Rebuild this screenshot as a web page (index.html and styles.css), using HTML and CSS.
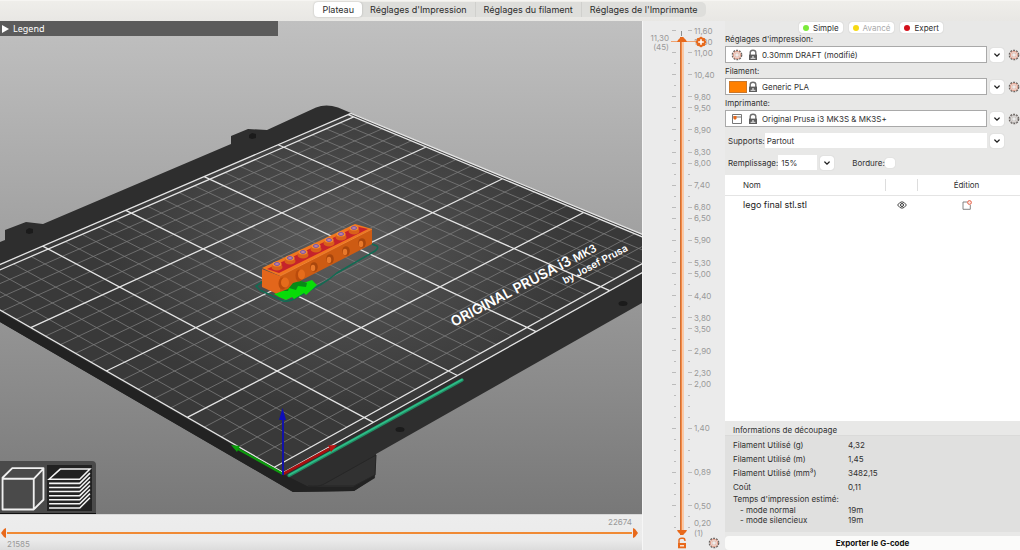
FILE: index.html
```html
<!DOCTYPE html>
<html lang="fr">
<head>
  <meta charset="UTF-8">
  <title>Plateau</title>
  <link rel="stylesheet" href="styles.css">
</head>
<body>
  <svg class="symbols" width="0" height="0" aria-hidden="true">
    <symbol id="gear" viewBox="0 0 12 12">
      <circle cx="6" cy="6" r="4.6" fill="none" stroke="#6b6461" stroke-width="1.5" stroke-dasharray="1.9 .99"/>
      <circle cx="6" cy="6" r="3.7" fill="#f3e9e5" stroke="currentColor" stroke-width=".8"/>
      <circle cx="6" cy="6" r="2.2" fill="#ededec" stroke="currentColor" stroke-width=".5"/>
    </symbol>
    <symbol id="lock" viewBox="0 0 10 12">
      <path d="M2.2 6V3.4Q2.2 1.2 5 1.2Q7.8 1.2 7.8 3.4V6" fill="none" stroke="#6e6e6e" stroke-width="1.4"/>
      <rect x="1" y="5.6" width="8" height="5.4" fill="#5c5c5c"/>
      <path d="M2.6 8.8h4.8v1H2.6z" fill="#e8e8e8"/>
      <path d="M4.4 7h1.2v2H4.4z" fill="#e8e8e8"/>
    </symbol>
    <symbol id="chevron" viewBox="0 0 8 8">
      <path d="M1.8 3L4 5.1L6.2 3" fill="none" stroke="#222" stroke-width="1.3" stroke-linecap="round"/>
    </symbol>
  </svg>

  <header>
    <nav class="tabs">
      <a href="#" class="on">Plateau</a>
      <a href="#">Réglages d'Impression</a>
      <a href="#">Réglages du filament</a>
      <a href="#">Réglages de l'Imprimante</a>
    </nav>
  </header>

  <main>
    <section class="preview">
      <div class="scene">
        <svg class="bed" viewBox="0 21 642 493" preserveAspectRatio="xMidYMid slice">
          <defs>
            <linearGradient id="sky" x1="0" y1="0" x2="0" y2="1">
              <stop offset="0" stop-color="#c0c0c0"/>
              <stop offset="1" stop-color="#787878"/>
            </linearGradient>
            <radialGradient id="plate" gradientUnits="userSpaceOnUse" cx="340" cy="250" r="230" gradientTransform="translate(0 75) scale(1 .7)">
              <stop offset="0" stop-color="#5c5c5c"/>
              <stop offset=".5" stop-color="#484848"/>
              <stop offset="1" stop-color="#393939"/>
            </radialGradient>
          </defs>
          <rect y="21" width="642" height="493" fill="url(#sky)"/>
          <!-- heatbed -->
          <path d="M0 242L5 240V230L26 222L43 224L231 144V136L248 129L267 130L316 107.500Q326 103.500 338 107.500L642 236V303L376 454L375 478L354 491L293 492L0 322Z" fill="#2e2e2e"/>
          <path d="M0 312L283 474L309 487H353L374 475V478L354 491L293 492L0 322Z" fill="#222"/>
          <path d="M308 486Q318 488 326 483L376 455L375 475L354 486Z" fill="#313131" stroke="#262626"/>
          <path d="M249 135l3-2 4 1v4l-4 1-3-1zM26 230l3-2 4 1v4l-4 1-3-1z" fill="#1b1b1b"/>
          <ellipse cx="400" cy="429.500" rx="4.500" ry="2.500" fill="#1b1b1b"/>
          <ellipse cx="623" cy="303.500" rx="4.500" ry="2.500" fill="#1b1b1b"/>
          <path id="surface" fill="url(#plate)"/>
          <path id="minor" fill="none" stroke="#7b7b7b" stroke-width=".8"/>
          <path id="major" fill="none" stroke="#e4e4e4" stroke-width="1.300"/>
          <g class="print" fill="#fff">
            <text class="brand" transform="translate(454 327) rotate(-28)">ORIGINAL PRUSA i3 <tspan class="model">MK3</tspan></text>
            <text class="author" transform="translate(565 284) rotate(-28)">by Josef Prusa</text>
          </g>
          <!-- purge line -->
          <path d="M289 475.500L462 380" stroke="#1f8c63" stroke-width="3.400" stroke-linecap="round"/>
          <path d="M289 475L462 379.500" stroke="#2fbd88" stroke-width="1.500" stroke-linecap="round"/>
          <!-- axes -->
          <path d="M283 474L329 449" stroke="#a80f0f" stroke-width="2.600"/>
          <path d="M337 445L328 445.500L331 452Z" fill="#b81212"/>
          <path d="M283 474L238 449" stroke="#0d990d" stroke-width="2.400"/>
          <path d="M231 445L240 446L237 452Z" fill="#0aa00a"/>
          <path d="M283 475V418" stroke="#1212a8" stroke-width="2"/>
          <path d="M282.500 408L286 420H279Z" fill="#0d0dba"/>
          <!-- skirt, brim and part -->
          <path d="M262 282L256 286L260 290L283 301Q290 302 297 297L320 285Q330 279 337 273L375 251Q379 248 377 246L372 244" fill="none" stroke="#126b53" stroke-width="1.600"/>
          <path d="M274 294L279 297L286 300L292 297L294 299L304 293L306 295L317 285L312 280L280 291Z" fill="#08dc08"/>
          <path d="M280 291l8 0 1-3 7 2 2-4 8 1 1-4-9-3-15 6z" fill="#078a17"/>
          <path d="M262 268L355 224L372 229L280 276Z" fill="#ef761f"/>
          <path d="M267 269L357 226.500L368 229L279 273Z" fill="#c5232b"/>
          <path d="M262 269L280 276V292L276 293.500L262 287Z" fill="#e3661b"/>
          <path d="M280 276L372 229V244L300 281L293 283L288 289L280 292Z" fill="#cd5b13"/>
          <path d="M280 276L372 229" stroke="#f18232" stroke-width="1"/>
          <g id="studs"></g>
          <g id="holes"></g>
          <ellipse cx="282.500" cy="283.500" rx="4" ry="6" fill="#b94b0c"/>
          <ellipse cx="285" cy="282.500" rx="4" ry="5" fill="#e56c1b"/>
          <ellipse cx="299" cy="275.500" rx="3.500" ry="6" fill="#b94b0c"/>
          <ellipse cx="301.500" cy="274.500" rx="3.500" ry="5" fill="#e56c1b"/>
        </svg>
        <button class="legend"><svg width="8" height="8" viewBox="0 0 8 8"><path d="M1 0L8 4L1 8Z" fill="#fff"/></svg>Legend</button>
        <div class="views">
          <button aria-label="Vue 3D">
            <svg viewBox="0 0 44 44"><path d="M2.500 11.500L12 2H42.500V33L33 42.500H2.500ZM2.500 12.500H33V42M33 12.500L42.500 2.500" fill="none" stroke="#f0f0f0" stroke-width="1.800" stroke-linejoin="round"/></svg>
          </button>
          <button class="on" aria-label="Aperçu">
            <svg viewBox="0 0 44 44" fill="none" stroke="#f4f4f4" stroke-width="1.500">
              <path d="M2 13L13 3H42L32 13Z"/>
              <path d="M2 17H32L42 7M2 21H32L42 11M2 25H32L42 15M2 29H32L42 19M2 33H32L42 23M2 37H32L42 27M2 41H32L42 31"/>
            </svg>
          </button>
        </div>
      </div>
      <div class="moves">
        <output class="last">22674</output>
        <div class="track">
          <input class="low" type="range" min="0" max="100" value="0" aria-label="Premier mouvement">
          <input class="high" type="range" min="0" max="100" value="100" aria-label="Dernier mouvement">
        </div>
        <output class="first">21585</output>
      </div>
    </section>

    <section class="layers">
      <div class="scale">
        <output class="current">11,30<br>(45)</output>
        <ol class="ruler">
          <li class="big">11,60</li><li class="big">11,30</li><li class="big">11,00</li><li></li>
          <li class="big">10,40</li><li></li><li class="big">9,80</li><li class="big">9,50</li>
          <li></li><li class="big">8,90</li><li></li><li class="big">8,30</li>
          <li class="big">8,00</li><li></li><li class="big">7,40</li><li></li>
          <li class="big">6,80</li><li class="big">6,50</li><li></li><li class="big">5,90</li>
          <li></li><li class="big">5,30</li><li class="big">5,00</li><li></li>
          <li class="big">4,40</li><li></li><li class="big">3,80</li><li class="big">3,50</li>
          <li></li><li class="big">2,90</li><li></li><li class="big">2,30</li>
          <li class="big">2,00</li><li></li><li></li><li></li>
          <li class="big">1,40</li><li></li><li></li><li></li>
          <li class="big">0,89</li><li></li><li></li><li class="big">0,50</li>
          <li></li><li class="bottom"><span>0,20<br>(1)</span></li>
        </ol>
        <div class="rail">
          <input class="high" type="range" min="1" max="46" value="46" aria-label="Couche supérieure">
          <input class="low" type="range" min="1" max="46" value="1" aria-label="Couche inférieure">
        </div>
        <button class="add" aria-label="Ajouter">
          <svg width="12" height="12" viewBox="0 0 12 12"><path d="M6 .5L7.800 1.800L10 2.300L10.400 4.500L11.500 6L10.400 7.500L10 9.700L7.800 10.200L6 11.500L4.200 10.200L2 9.700L1.600 7.500L.5 6L1.600 4.500L2 2.300L4.200 1.800Z" fill="#e8691b"/><path d="M6 3.200V8.800M3.200 6H8.800" stroke="#fff" stroke-width="1.600"/></svg>
        </button>
      </div>
      <div class="tools">
        <button aria-label="Verrouiller">
          <svg width="10" height="12" viewBox="0 0 10 12"><path d="M2 6V3Q2 1.300 4.500 1.300H6Q8 1.300 8 4" fill="none" stroke="#e8691b" stroke-width="1.400"/><path d="M1 6H9V11.300H1Z" fill="#e8691b"/><path d="M3 8h4v1.500H3z" fill="#fbe3d3"/></svg>
        </button>
        <button aria-label="Options"><svg class="gear" width="12" height="12"><use href="#gear"/></svg></button>
      </div>
    </section>

    <aside>
      <div class="modes">
        <button><i class="dot green"></i>Simple</button>
        <button class="off"><i class="dot yellow"></i>Avancé</button>
        <button><i class="dot red"></i>Expert</button>
      </div>

      <label class="title" for="print">Réglages d'impression:</label>
      <div class="row">
        <div class="combo">
          <svg class="gear" width="12" height="12"><use href="#gear"/></svg>
          <svg class="lock" width="10" height="12"><use href="#lock"/></svg>
          <select id="print"><option>0.30mm DRAFT (modifié)</option></select>
        </div>
        <button class="drop" aria-label="Ouvrir"><svg width="8" height="8"><use href="#chevron"/></svg></button>
        <button class="edit" aria-label="Modifier"><svg class="gear" width="12" height="12"><use href="#gear"/></svg></button>
      </div>

      <label class="title" for="filament">Filament:</label>
      <div class="row">
        <div class="combo">
          <i class="swatch"></i>
          <svg class="lock" width="10" height="12"><use href="#lock"/></svg>
          <select id="filament"><option>Generic PLA</option></select>
        </div>
        <button class="drop" aria-label="Ouvrir"><svg width="8" height="8"><use href="#chevron"/></svg></button>
        <button class="edit" aria-label="Modifier"><svg class="gear" width="12" height="12"><use href="#gear"/></svg></button>
      </div>

      <label class="title" for="printer">Imprimante:</label>
      <div class="row">
        <div class="combo">
          <svg class="gear" width="12" height="12" viewBox="0 0 12 12"><path d="M1.500 1.500H10.500V10.500H1.500Z" fill="#fff" stroke="#777"/><path d="M1.500 4H10.500" stroke="#777"/><path d="M2.500 3H5.500V6H4.500V7H3.500V6H2.500Z" fill="#e8691b"/></svg>
          <svg class="lock" width="10" height="12"><use href="#lock"/></svg>
          <select id="printer"><option>Original Prusa i3 MK3S &amp; MK3S+</option></select>
        </div>
        <button class="drop" aria-label="Ouvrir"><svg width="8" height="8"><use href="#chevron"/></svg></button>
        <button class="edit grey" aria-label="Modifier"><svg class="gear" width="12" height="12"><use href="#gear"/></svg></button>
      </div>

      <div class="row supports">
        <label for="supports">Supports:</label>
        <select id="supports"><option>Partout</option></select>
        <button class="drop" aria-label="Ouvrir"><svg width="8" height="8"><use href="#chevron"/></svg></button>
      </div>
      <div class="row infill">
        <label for="infill">Remplissage:</label>
        <input id="infill" type="text" value="15%">
        <button class="drop" aria-label="Ouvrir"><svg width="8" height="8"><use href="#chevron"/></svg></button>
        <label class="brim" for="brim">Bordure:</label>
        <input id="brim" type="checkbox">
      </div>

      <div class="objects">
        <table>
          <thead>
            <tr><th class="name">Nom</th><th class="eye"></th><th class="editing">Édition</th></tr>
          </thead>
          <tbody>
            <tr>
              <td class="name">lego final stl.stl</td>
              <td class="eye"><svg width="10" height="8" viewBox="0 0 10 8"><path d="M.6 4Q5-2.400 9.400 4Q5 10.400.6 4Z" fill="none" stroke="#444" stroke-width="1"/><circle cx="5" cy="4" r="1.500" fill="none" stroke="#333" stroke-width="1"/></svg></td>
              <td class="editing"><svg width="10" height="10" viewBox="0 0 10 10"><path d="M5.500 2H1V9.300H8.300V5" fill="none" stroke="#777" stroke-width=".9"/><circle cx="7.500" cy="2.500" r="1.900" fill="#fde6de" stroke="#e2533a" stroke-width=".9"/></svg></td>
            </tr>
          </tbody>
        </table>
      </div>

      <h2>Informations de découpage</h2>
      <div class="info">
        <table>
          <tr><th>Filament Utilisé (g)</th><td>4,32</td></tr>
          <tr><th>Filament Utilisé (m)</th><td>1,45</td></tr>
          <tr><th>Filament Utilisé (mm³)</th><td>3482,15</td></tr>
          <tr><th>Coût</th><td>0,11</td></tr>
          <tr class="time"><th colspan="2">Temps d'impression estimé:</th></tr>
          <tr class="mode"><th>- mode normal</th><td>19m</td></tr>
          <tr class="mode"><th>- mode silencieux</th><td>19m</td></tr>
        </table>
      </div>
      <button class="export">Exporter le G-code</button>
    </aside>
  </main>
<script src="script.js"></script>
</body>
</html>
```

FILE: styles.css
```css
* {
  margin: 0;
  padding: 0;
  box-sizing: border-box;
}
body {
  display: flex;
  flex-direction: column;
  height: 100vh;
  overflow: hidden;
  font-family: Inter, "Liberation Sans", sans-serif;
  font-size: 8px;
  color: #303030;
  background: #ebebea;
}
button, input, select {
  font: inherit;
  color: inherit;
  border: 0;
  background: none;
}
button svg {
  display: block;
}
.symbols {
  position: absolute;
}
.gear {
  color: #d98a74;
}

/* top bar */
header {
  display: flex;
  justify-content: center;
  height: 21px;
  padding-top: 1px;
  border-top: 1px solid #f6f5f2;
  background: linear-gradient(#efeeea, #e8e7e4);
}
.tabs {
  display: flex;
  align-items: center;
  height: 15px;
  border-radius: 5px;
  background: #dededb;
}
.tabs a {
  padding: 0 8px;
  line-height: 15px;
  font-size: 9px;
  color: #2c2c2c;
  text-decoration: none;
  border-right: 1px solid #d0d0cd;
}
.tabs a:last-child {
  border-right: 0;
}
.tabs .on {
  border: 0;
  border-radius: 4px;
  background: #fff;
  box-shadow: 0 0 2px rgba(0,0,0,0.25);
}

main {
  display: flex;
  flex: 1;
  min-height: 0;
}

/* 3D preview */
.preview {
  display: flex;
  flex-direction: column;
  flex: 1;
  min-width: 0;
}
.scene {
  position: relative;
  flex: 1;
  min-height: 0;
  overflow: hidden;
}
.bed {
  display: block;
  width: 100%;
  height: 100%;
}
.print {
  font-weight: 600;
}
.brand {
  font-size: 14px;
}
.model {
  font-size: 11px;
}
.author {
  font-size: 10px;
}
.legend {
  position: absolute;
  left: 0;
  top: 0;
  display: flex;
  align-items: center;
  gap: 4px;
  width: 278px;
  height: 15px;
  padding-left: 1px;
  font-family: "Noto Sans", sans-serif;
  font-size: 9px;
  color: #fff;
  background: #5b5b5b;
}
.views {
  position: absolute;
  left: 0;
  bottom: 0;
  display: flex;
  gap: 2px;
  padding: 4px 4px 2px 0;
  border-bottom: 1px solid #111;
  border-top-right-radius: 4px;
  background: #4a4a4a;
}
.views button {
  width: 45px;
  height: 46px;
}
.views .on {
  background: #222;
}

/* horizontal slider */
.moves {
  display: flex;
  flex-direction: column;
  justify-content: space-between;
  height: 36px;
  padding: 2px 4px 1px 1px;
  line-height: 10px;
  color: #999;
  border-top: 1px solid #d8d8d8;
  background: linear-gradient(#ededed, #ebebeb 70%, #dcdcdc);
}
.last {
  padding-right: 6px;
  text-align: right;
}
.first {
  padding-left: 6px;
}
.track {
  position: relative;
  height: 10px;
  background: linear-gradient(#f08a34, #f08a34) center / calc(100% - 12px) 2px no-repeat;
}
.track input {
  position: absolute;
  inset: 0;
  width: 100%;
  height: 10px;
  appearance: none;
  pointer-events: none;
}
.track input::-webkit-slider-thumb {
  appearance: none;
  width: 5px;
  height: 10px;
  background: #e8691b;
  pointer-events: auto;
}
.track .low::-webkit-slider-thumb {
  clip-path: polygon(100% 0, 100% 100%, 60% 90%, 0 50%, 60% 10%);
}
.track .high::-webkit-slider-thumb {
  clip-path: polygon(0 0, 0 100%, 40% 90%, 100% 50%, 40% 10%);
}

/* vertical slider */
.layers {
  display: flex;
  flex-direction: column;
  width: 83px;
  border-left: 1px solid #f6f6f6;
  color: #999;
  background: #ebebeb;
}
.scale {
  position: relative;
  display: flex;
  flex: 1;
  min-height: 0;
  padding-top: 4px;
}
.current {
  width: 29px;
  padding: 9px 3px 0 0;
  line-height: 9px;
  text-align: right;
}
.ruler {
  display: flex;
  flex-direction: column;
  flex: 1;
  list-style: none;
}
.ruler li {
  display: flex;
  align-items: center;
  flex: 1;
  min-height: 0;
  line-height: 10px;
}
.ruler li::before {
  content: "";
  width: 16px;
  height: 1px;
  margin-right: 2px;
  margin-left: 2px;
  background: linear-gradient(#bbb, #bbb) left / 2px 1px no-repeat, linear-gradient(#bbb, #bbb) right / 2px 1px no-repeat;
}
.ruler .big::before {
  width: 20px;
  margin-left: 0;
  background-size: 4px 1px;
}
.ruler .bottom {
  align-items: flex-end;
}
.ruler .bottom::before {
  margin-bottom: 5px;
}
.bottom span {
  padding-left: 2px;
  margin-bottom: -5px;
}
.rail {
  position: absolute;
  left: 34px;
  top: 16px;
  bottom: -2px;
  width: 10px;
  background: linear-gradient(to right, #cf6f35 1px, #f58a45 1px, #f58a45 2px, #f9c9a6 2px) center / 4px 100% no-repeat;
}
.rail::before {
  content: "";
  position: absolute;
  left: -6px;
  top: 4px;
  width: 30px;
  height: 1px;
  background: #f0a26f;
}
.rail::after {
  content: "";
  position: absolute;
  left: 4px;
  top: -6px;
  width: 1px;
  height: 5px;
  background: #8d8d8d;
}
.rail input {
  position: absolute;
  inset: 0;
  width: 10px;
  height: 100%;
  appearance: none;
  writing-mode: vertical-lr;
  direction: rtl;
  pointer-events: none;
}
.rail input::-webkit-slider-thumb {
  appearance: none;
  width: 10px;
  height: 5px;
  background: #e8691b;
  pointer-events: auto;
}
.rail .high::-webkit-slider-thumb {
  clip-path: polygon(0 100%, 10% 60%, 40% 0, 60% 0, 90% 60%, 100% 100%);
}
.rail .low::-webkit-slider-thumb {
  clip-path: polygon(0 0, 10% 40%, 40% 100%, 60% 100%, 90% 40%, 100% 0);
}
.add {
  position: absolute;
  left: 52px;
  top: 15px;
}
.tools {
  display: flex;
  justify-content: space-between;
  align-items: center;
  height: 17px;
  padding: 3px 5px 0 34px;
}

/* settings */
aside {
  display: flex;
  flex-direction: column;
  width: 295px;
  background: #e8e8e7;
}
.modes {
  display: flex;
  justify-content: center;
  gap: 6px;
  padding: 1px 3px 0 0;
}
.modes button {
  display: flex;
  align-items: center;
  gap: 4px;
  height: 11px;
  padding: 0 4px;
  border-radius: 3px;
  background: #fff;
  box-shadow: 0 0 1px rgba(0,0,0,0.3);
}
.modes .off {
  color: #aaa;
}
.dot {
  width: 6px;
  height: 6px;
  border-radius: 50%;
}
.green {
  background: #7bea3a;
}
.yellow {
  background: #f6d914;
}
.red {
  background: #d3101b;
}
.title {
  height: 15px;
  padding-top: 2px;
  line-height: 12px;
}
.modes + .title {
  height: 13px;
  padding-top: 0;
}
.row {
  display: flex;
  align-items: center;
}
.combo {
  display: flex;
  align-items: center;
  flex: 1;
  height: 17px;
  border: 1px solid #a9a9a9;
  background: #fff;
}
.combo .gear {
  margin: 0 5px;
}
.combo select {
  flex: 1;
  height: 14px;
  padding-left: 4px;
  appearance: none;
}
.swatch {
  width: 18px;
  height: 12px;
  margin: 0 1px 0 3px;
  border: 1px solid #c9772a;
  background: #ff8000;
}
.drop {
  display: flex;
  align-items: center;
  justify-content: center;
  width: 14px;
  height: 14px;
  margin-left: 3px;
  border-radius: 3px;
  background: #fff;
  box-shadow: 0 0 1px rgba(0,0,0,0.25);
}
.edit {
  margin-left: 4px;
}
.grey .gear {
  color: #999;
}
.supports {
  padding: 6px 16px 0 3px;
}
.supports select {
  flex: 1;
  height: 15px;
  padding-left: 2px;
  appearance: none;
  background: #fff;
}
.infill {
  padding: 7px 0 5px 3px;
}
.infill input[type=text] {
  width: 39px;
  height: 15px;
  padding-left: 3px;
  background: #fff;
}
.brim {
  margin-left: 18px;
}
.infill input[type=checkbox] {
  width: 10px;
  height: 10px;
  appearance: none;
  border-radius: 3px;
  background: #fff;
  box-shadow: 0 0 1px rgba(0,0,0,0.2);
}

/* object list */
.objects {
  flex: 1;
  background: #fff;
}
.objects table {
  width: 100%;
  table-layout: fixed;
  border-collapse: collapse;
}
.objects th {
  height: 20px;
  font-weight: normal;
  border-bottom: 1px solid #e4e4e4;
}
.objects td {
  height: 19px;
  font-size: 9px;
  color: #222;
}
.objects .name {
  padding-left: 18px;
  text-align: left;
}
.objects .eye {
  width: 33px;
  text-align: center;
}
.objects th.eye {
  background: linear-gradient(#ddd, #ddd) left / 1px 12px no-repeat, linear-gradient(#ddd, #ddd) right / 1px 12px no-repeat;
}
.objects .editing {
  width: 102px;
  padding-right: 5px;
  text-align: center;
}
.objects svg {
  display: block;
  margin: 0 auto;
}

/* slicing info */
h2 {
  height: 14px;
  padding: 4px 8px 0;
  line-height: 10px;
  font-size: 8px;
  font-weight: normal;
}
.info {
  padding: 2px 8px 7px;
  border-top: 1px solid #dadad9;
  background: #e0e0df;
}
.info table {
  border-spacing: 0;
}
.info tr {
  height: 14px;
}
.info th {
  width: 115px;
  text-align: left;
  font-weight: normal;
}
.info .time {
  height: 11px;
  line-height: 11px;
}
.info .mode {
  height: 10px;
  line-height: 10px;
}
.mode th {
  padding-left: 7px;
}
.export {
  height: 14px;
  margin-top: 4px;
  border-radius: 4px 0 0 4px;
  font-weight: 700;
  color: #111;
  background: #fbfbfa;
}
```

FILE: script.js
```javascript
var surface = document.getElementById('surface');
var minor = document.getElementById('minor');
var major = document.getElementById('major');

// bed coordinates in mm -> point of the camera view
function project(x, y) {
  var u = x / 200;
  var v = y / 150;
  var w = 0.143 * u + 0.11095 * v + 1;
  var px = (412.3 * u - 240.19 * v + 274.3) / w;
  var py = (-139.6 * u - 103.24 * v + 467.3) / w;
  return px.toFixed(2) + ' ' + py.toFixed(2);
}

function line(x1, y1, x2, y2) {
  return 'M' + project(x1, y1) + 'L' + project(x2, y2);
}

var thin = '';
var thick = '';
for (var x = 0; x <= 250; x += 10) {
  if (x % 50 == 0) {
    thick += line(x, -5, x, 204);
  } else {
    thin += line(x, 0, x, 200);
  }
}
for (var y = 0; y <= 200; y += 10) {
  if (y % 50 == 0) {
    thick += line(0, y, 250, y);
  } else {
    thin += line(0, y, 250, y);
  }
}
thick += line(0, -5, 252, -5) + line(0, 204, 252, 204) + line(252, -5, 252, 204);
minor.setAttribute('d', thin);
major.setAttribute('d', thick);
surface.setAttribute('d', 'M' + project(0, -5) + 'L' + project(252, -5) + 'L' + project(252, 204) + 'L' + project(0, 204) + 'Z');

var studs = [[277, 265], [290, 259], [303, 253], [316, 247], [329, 241], [341, 235], [354, 229]];
var html = '';
for (var i = 0; i < studs.length; i++) {
  var sx = studs[i][0];
  var sy = studs[i][1];
  html += '<ellipse cx="' + sx + '" cy="' + (sy + 2) + '" rx="5.5" ry="3.6" fill="#d9601a"/>';
  html += '<ellipse cx="' + sx + '" cy="' + (sy - 1) + '" rx="4.6" ry="2.6" fill="#f08a35"/>';
  html += '<ellipse cx="' + sx + '" cy="' + (sy - 1) + '" rx="2.6" ry="1.4" fill="#c58aa0" stroke="#6c4bb0" stroke-width=".9"/>';
}
document.getElementById('studs').innerHTML = html;

var holes = [[314, 267], [330, 259], [346, 251], [362, 243]];
html = '';
for (i = 0; i < holes.length; i++) {
  html += '<ellipse cx="' + holes[i][0] + '" cy="' + holes[i][1] + '" rx="3.8" ry="4.8" fill="#a8460d"/>';
  html += '<ellipse cx="' + (holes[i][0] - 1) + '" cy="' + (holes[i][1] + 1) + '" rx="2.2" ry="3.2" fill="#e8792b"/>';
}
document.getElementById('holes').innerHTML = html;
```
